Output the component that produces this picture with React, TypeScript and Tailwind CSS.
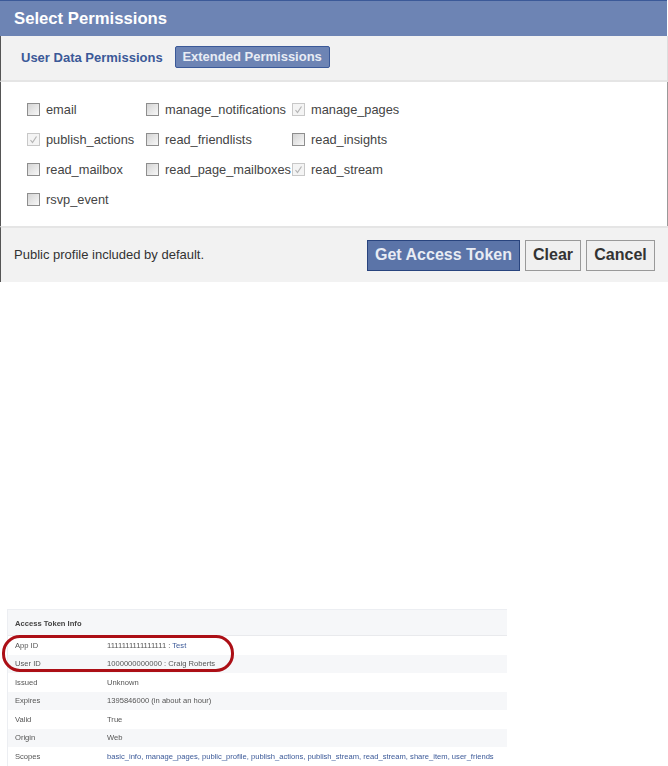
const ROWS = [
  [{ name: 'email' }, { name: 'manage_notifications' }, { name: 'manage_pages', on: true }],
  [{ name: 'publish_actions', on: true }, { name: 'read_friendlists' }, { name: 'read_insights' }],
  [{ name: 'read_mailbox' }, { name: 'read_page_mailboxes' }, { name: 'read_stream', on: true }],
  [{ name: 'rsvp_event' }],
];

const INFO = [
  { label: 'App ID', value: '1111111111111111 : ', link: 'Test' },
  { label: 'User ID', value: '1000000000000 : Craig Roberts', shade: true },
  { label: 'Issued', value: 'Unknown' },
  { label: 'Expires', value: '1395846000 (in about an hour)', shade: true },
  { label: 'Valid', value: 'True' },
  { label: 'Origin', value: 'Web', shade: true },
  {
    label: 'Scopes',
    value: '',
    link: 'basic_info, manage_pages, public_profile, publish_actions, publish_stream, read_stream, share_item, user_friends',
  },
];

function Perm({ name, on }: { name: string; on?: boolean }) {
  return (
    <div className="flex items-center h-[30px]">
      <span
        className={`w-[13px] h-[13px] mt-[-2px] shrink-0 border flex items-center justify-center ${
          on ? 'border-[#c8c8c8] bg-[#f4f4f4]' : 'border-[#8e8e8e] bg-gradient-to-br from-[#d4d4d4] to-[#f8f8f8]'
        }`}
      >
        {on && (
          <svg viewBox="0 0 11 11" className="w-[11px] h-[11px]">
            <path d="M2.5 6 L4.5 8.5 L8.5 2.5" fill="none" stroke="#b4b4b4" strokeWidth="1.2" />
          </svg>
        )}
      </span>
      <span className="ml-[6px] text-[12.8px] leading-none text-[#444] whitespace-nowrap">{name}</span>
    </div>
  );
}

export default function App() {
  return (
    <div className="relative w-[668px] h-[766px] bg-white font-['Liberation_Sans',Arial,sans-serif] overflow-hidden">
      <div className="h-[282px] flex flex-col">
        <div className="h-[36px] w-[667px] bg-[#6d84b4] border-t border-[#3b5998] pl-[14px] flex items-center text-white font-bold text-[16.7px]">
          Select Permissions
        </div>
        <div className="h-[46px] bg-[#f2f2f2] border-b-2 border-[#e5e5e5] border-l border-r border-l-[#555] border-r-[#ddd] pl-[20px] flex items-center gap-[12px]">
          <span className="text-[13px] font-bold text-[#3b5998] mt-[-1px]">User Data Permissions</span>
          <span className="h-[22px] w-[155px] flex items-center justify-center rounded-[2px] bg-[#6d84b4] border border-[#3b5998] text-[13px] font-bold text-[#e8ecf4] mt-[-3px]">
            Extended Permissions
          </span>
        </div>
        <div className="h-[144px] bg-white border-l border-r border-l-[#555] border-r-[#999] pl-[26px] pt-[13px]">
          {ROWS.map((row, i) => (
            <div key={i} className="grid grid-cols-[119px_146px_1fr]">
              {row.map((p) => (
                <Perm key={p.name} name={p.name} on={p.on} />
              ))}
            </div>
          ))}
        </div>
        <div className="flex-1 bg-[#f2f2f2] border-t-2 border-[#e5e5e5] border-l border-l-[#555] pl-[13px] pr-[13px] flex items-center justify-between">
          <span className="text-[13px] text-[#333] mt-[-1px]">Public profile included by default.</span>
          <div className="flex gap-[5px]">
            <button className="h-[31px] w-[153px] bg-[#5b74a8] border border-[#29447e] text-[#e8ecf4] font-bold text-[16px]">
              Get Access Token
            </button>
            <button className="h-[31px] w-[56px] bg-[#f0f0f0] border border-[#999] text-[#333] font-bold text-[16px]">
              Clear
            </button>
            <button className="h-[31px] w-[69px] bg-[#f0f0f0] border border-[#999] text-[#333] font-bold text-[16px]">
              Cancel
            </button>
          </div>
        </div>
      </div>

      <div className="mt-[327px] ml-[7px] w-[500px] border-l border-t border-[#eceef2] text-[7.6px] text-[#555] blur-[0.4px]">
        <div className="h-[26px] pt-[3px] bg-[#f6f7f9] border-b border-[#e9eaed] pl-[7px] flex items-center font-bold text-[#444]">
          Access Token Info
        </div>
        {INFO.map((r) => (
          <div key={r.label} className={`h-[18.5px] flex items-center ${r.shade ? 'bg-[#f6f7f9]' : 'bg-white'}`}>
            <div className="w-[92px] shrink-0 pl-[7px]">{r.label}</div>
            <div className="pl-[7px] whitespace-nowrap">
              {r.value}
              {r.link && <span className="text-[#3b5998]">{r.link}</span>}
            </div>
          </div>
        ))}
      </div>

      {/* red marker drawn over the first two rows */}
      <div className="absolute left-[2px] top-[635px] w-[232px] h-[37px] border-[3px] border-[#ac0f16] rounded-[18px]" />
    </div>
  );
}
